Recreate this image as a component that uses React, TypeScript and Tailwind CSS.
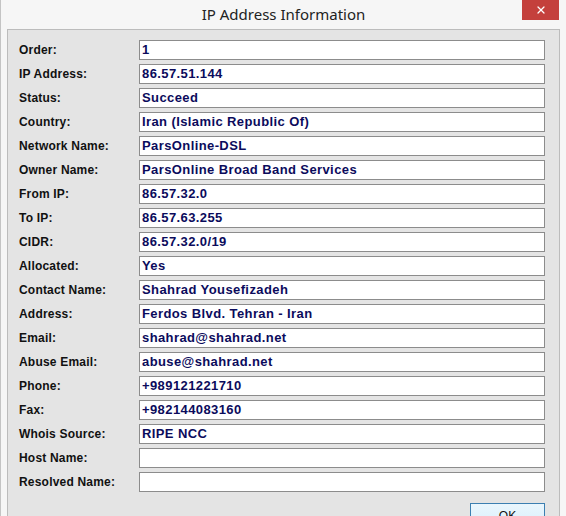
import { X } from "lucide-react";

type Field = { label: string; value: string };

const FIELDS: Field[] = [
  { label: "Order:", value: "1" },
  { label: "IP Address:", value: "86.57.51.144" },
  { label: "Status:", value: "Succeed" },
  { label: "Country:", value: "Iran (Islamic Republic Of)" },
  { label: "Network Name:", value: "ParsOnline-DSL" },
  { label: "Owner Name:", value: "ParsOnline Broad Band Services" },
  { label: "From IP:", value: "86.57.32.0" },
  { label: "To IP:", value: "86.57.63.255" },
  { label: "CIDR:", value: "86.57.32.0/19" },
  { label: "Allocated:", value: "Yes" },
  { label: "Contact Name:", value: "Shahrad Yousefizadeh" },
  { label: "Address:", value: "Ferdos Blvd. Tehran - Iran" },
  { label: "Email:", value: "shahrad@shahrad.net" },
  { label: "Abuse Email:", value: "abuse@shahrad.net" },
  { label: "Phone:", value: "+989121221710" },
  { label: "Fax:", value: "+982144083160" },
  { label: "Whois Source:", value: "RIPE NCC" },
  { label: "Host Name:", value: "" },
  { label: "Resolved Name:", value: "" },
];

function FieldRow({ label, value }: Field) {
  return (
    <div className="flex h-[20px] items-center">
      <span className="w-[120px] shrink-0 text-[12px] font-bold tracking-[0.2px] text-[#111]">{label}</span>
      <div className="flex h-[20px] w-[406px] items-center border border-[#8c8c8c] bg-white px-[2px]">
        <span className="text-[13px] font-bold tracking-[0.4px] text-[#0b0b5c]">{value}</span>
      </div>
    </div>
  );
}

export default function App() {
  return (
    <div
      className="flex h-[516px] w-[566px] flex-col overflow-hidden border-l border-[#c4c4c4] bg-[#f6f6f6]"
      style={{ fontFamily: '"Liberation Sans", Arial, sans-serif' }}
    >
      {/* title bar */}
      <div className="relative flex h-[29px] shrink-0 items-center justify-center">
        <span className="text-[15px] text-[#222]" style={{ fontFamily: '"Noto Sans", "Open Sans", sans-serif' }}>
          IP Address Information
        </span>
        <div className="absolute right-[7px] top-0 flex h-[20px] w-[37px] items-center justify-center bg-[#c4403c]">
          <X size={12} strokeWidth={2.5} className="text-white" />
        </div>
      </div>

      {/* fields panel */}
      <div className="ml-[6px] mr-[6px] flex flex-1 flex-col border border-[#bcbcbc] bg-[#e4e4e4] pl-[11px] pt-[10px]">
        <div className="flex flex-col gap-[4px]">
          {FIELDS.map((f) => (
            <FieldRow key={f.label} {...f} />
          ))}
        </div>
        <div className="mt-[11px] flex w-[526px] justify-end">
          <button className="h-[24px] w-[75px] border border-[#3c7fb1] bg-gradient-to-b from-[#eaf6fd] to-[#d9f0fc] pt-[2px] text-[12px] leading-none text-[#111]">
            OK
          </button>
        </div>
      </div>
    </div>
  );
}
